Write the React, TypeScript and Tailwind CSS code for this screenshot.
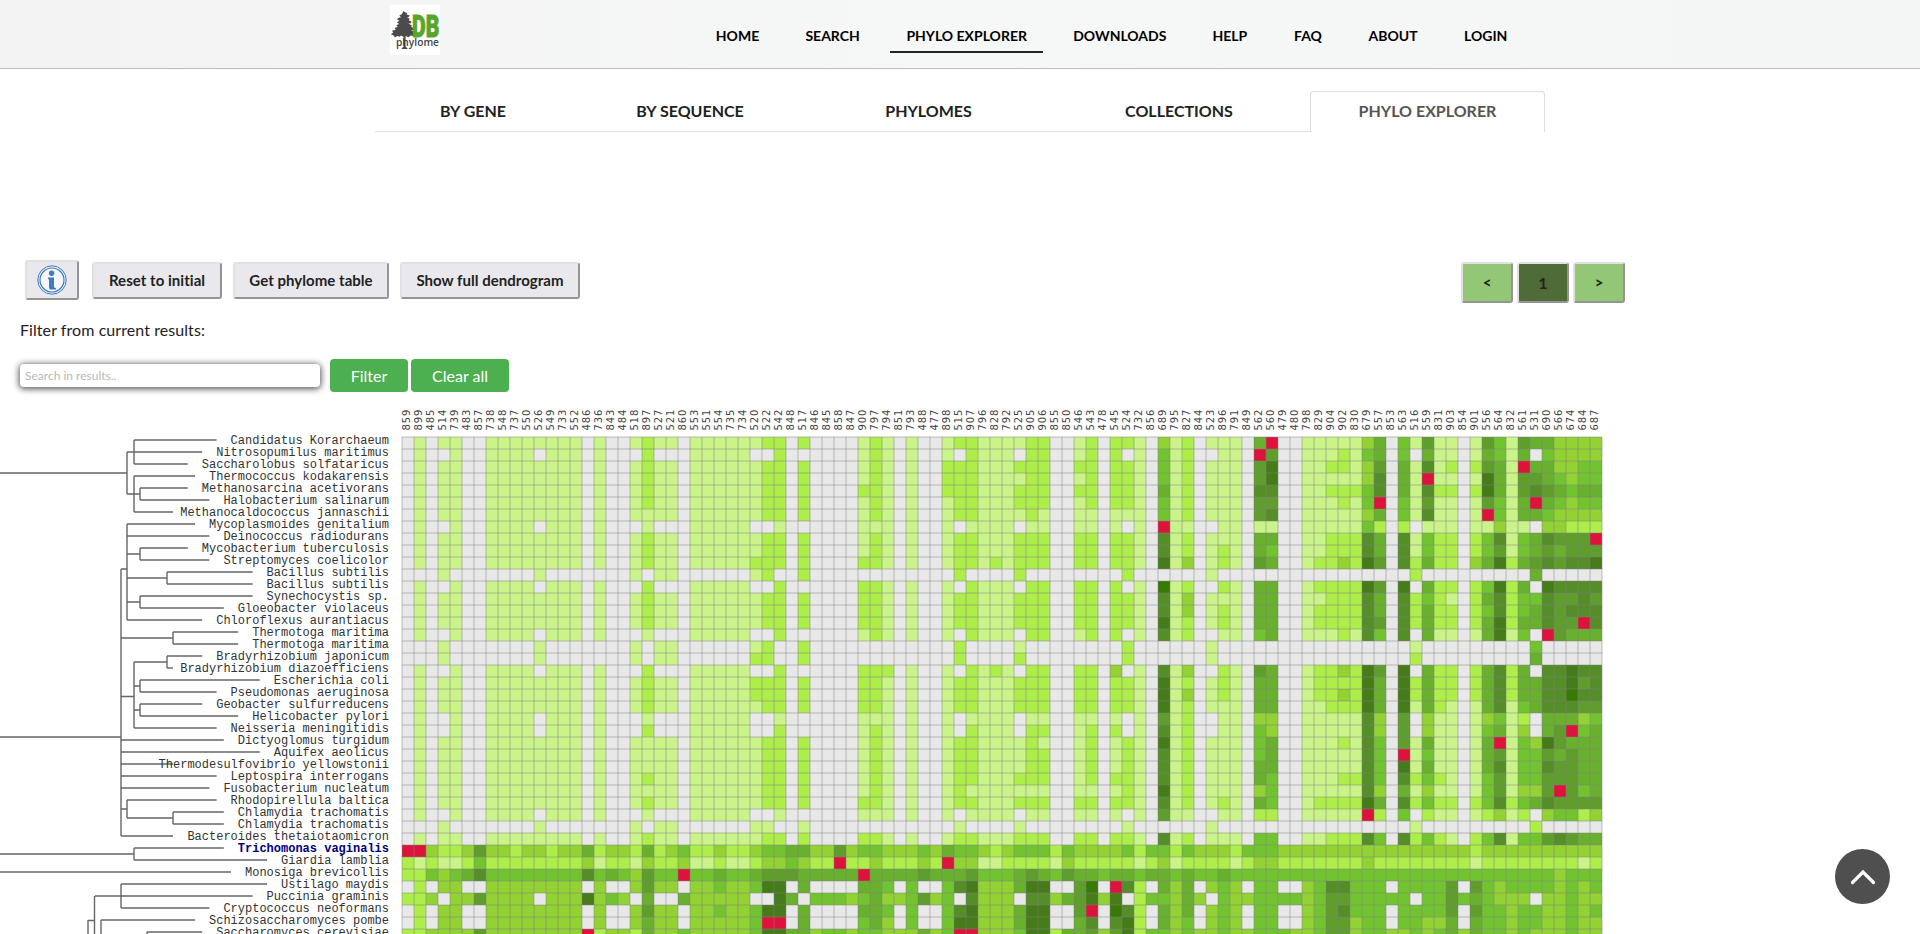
import React from 'react';

const HEADS = (
  '859 899 485 514 739 483 857 738 548 737 550 526 549 733 552 486 736 843 484 518 897 527 521 860 553 551 554 735 734 520 522 542 848 517 ' +
  '846 845 858 847 900 797 794 851 793 488 477 898 515 907 796 828 792 525 905 906 855 850 546 543 478 545 524 732 856 689 795 827 844 523 ' +
  '896 791 849 562 560 479 480 798 829 904 902 830 679 557 853 563 516 559 831 903 854 901 556 564 832 561 531 690 566 674 684 687'
).split(' ');

// name, x where the leaf branch starts, cell levels (0 = absent, 1-9 = amount, R = seed)
const F = '0101100 11111111 0100';
const M = '0100100 11110111 0100';
const S = '0001000 00001000 0000';
const ROWS: [string, number, string][] = [
  ['Candidatus Korarchaeum', 134, `${F} 12110 11111 12202 0000 1210100 122111122 00 1202210 31201 1105R00 11111 35041611 0164165 53333`],
  ['Nitrosopumilus maritimus', 127, `${M} 02000 11111 00200 0000 1210100 102111022 00 1202010 41200 110R600 11121 45040511 0154150 43333`],
  ['Saccharolobus solfataricus', 134, `${F} 12110 11111 12202 0000 1210100 222111222 00 2202210 41201 1106800 11221 36051712 02651R5 53344`],
  ['Thermococcus kodakarensis', 134, `${F} 12110 11111 12202 0000 1210100 222111122 00 1202210 41201 1106800 11111 37051R11 0185166 54344`],
  ['Methanosarcina acetivorans', 140, `${F} 12110 11111 12202 0000 2210100 222111222 00 2202210 51201 1107700 11222 47051722 0285167 65455`],
  ['Halobacterium salinarum', 140, `${F} 12110 11111 12202 0000 1210100 122111222 00 1202210 41201 1106600 11121 4R041611 016415R 54344`],
  ['Methanocaldococcus jannaschii', 134, `${F} 11110 11111 12202 0000 1210100 122111121 00 1101110 41201 1106700 11111 35041711 01R4155 43333`],
  ['Mycoplasmoides genitalium', 127, `${M} 01000 11111 00100 0000 1110100 101111011 00 1101010 R1100 1101100 11111 42020111 0113110 33222`],
  ['Deinococcus radiodurans', 127, `${F} 12110 11111 12202 0000 1210100 122111222 00 2202210 71201 1105500 11222 75071422 0247145 7666R`],
  ['Mycobacterium tuberculosis', 140, `${F} 12110 11111 12202 0000 1210100 122111222 00 2202210 71201 2105400 11222 75071422 0246145 65666`],
  ['Streptomyces coelicolor', 140, `${F} 12110 11111 22202 0000 2210100 122121222 00 2202210 81301 2106500 12232 86072522 0358256 76778`],
  ['Bacillus subtilis', 167, `${S} 10110 00000 12002 0000 0000000 020000200 00 0000200 00001 0000000 00000 00002000 0000005 00000`],
  ['Bacillus subtilis', 167, `${M} 02000 11111 00200 0000 2210100 102111022 00 2202010 91200 2105500 12222 86080522 0248250 87777`],
  ['Synechocystis sp.', 140, `${F} 12110 11111 12202 0000 2210100 122111222 00 2202210 71301 1105500 11222 75072421 0257244 76676`],
  ['Gloeobacter violaceus', 140, `${F} 12110 11111 12202 0000 2210100 122111222 00 2202210 71301 2105500 12222 75072522 0247245 76777`],
  ['Chloroflexus aurantiacus', 127, `${F} 12110 11111 12202 0000 2210100 122111222 00 2202210 81201 2105500 12222 76072522 0258255 766R7`],
  ['Thermotoga maritima', 173, `${M} 01000 11111 00200 0000 1210100 102111022 00 1202010 71200 1104500 11121 74070511 0158140 R6555`],
  ['Thermotoga maritima', 173, `${S} 10110 00000 12002 0000 0000000 020000100 00 0000200 00001 0000000 00000 00001000 0000004 00000`],
  ['Bradyrhizobium japonicum', 167, `${S} 10110 00000 22002 0000 0000000 020000200 00 0000200 00001 0000000 00000 00002000 0000005 00000`],
  ['Bradyrhizobium diazoefficiens', 167, `${M} 02000 11111 00200 0000 2220100 102121022 00 2203010 71300 2106500 12232 86080522 0257250 77877`],
  ['Escherichia coli', 140, `${F} 12110 11111 22202 0000 2210100 122111222 00 2202210 81201 2105500 12222 85082522 0257255 77867`],
  ['Pseudomonas aeruginosa', 140, `${F} 12110 11111 22202 0000 2210100 122111222 00 2202210 81301 2105500 12232 85082522 0257255 77977`],
  ['Geobacter sulfurreducens', 140, `${F} 12110 11111 12202 0000 2210100 122111222 00 2202210 81201 1105500 11222 85081521 0157145 77766`],
  ['Helicobacter pylori', 140, `${M} 01000 11111 00100 0000 1110100 101111011 00 1101010 61200 1103300 11111 73060311 0134120 55534`],
  ['Neisseria meningitidis', 134, `${M} 02000 11111 00200 0000 1210100 102111022 00 1202010 71200 1104300 11111 73060311 0145130 56R45`],
  ['Dictyoglomus turgidum', 121, `${F} 11110 11111 12202 0000 1210100 122111121 00 1201210 81201 1104500 11121 74061511 015R143 86555`],
  ['Aquifex aeolicus', 121, `${F} 11110 11111 12202 0000 1210100 122111122 00 1201210 71201 1104500 11111 740R1411 0156144 65655`],
  ['Thermodesulfovibrio yellowstonii', 121, `${F} 11110 11111 12202 0000 1210100 122111122 00 1201210 71201 1105500 11111 74081511 0157144 76655`],
  ['Leptospira interrogans', 121, `${F} 12110 11111 12202 0000 1210100 122111222 00 1202210 71201 1105400 11122 74072421 0146144 66655`],
  ['Fusobacterium nucleatum', 121, `${F} 11110 11111 12202 0000 1210100 121111111 00 1101210 81201 1103400 11111 73051311 0146133 6R645`],
  ['Rhodopirellula baltica', 127, `${F} 12110 11111 12202 0000 2210100 122111222 00 2202210 71201 2105400 12222 85072422 0247245 76666`],
  ['Chlamydia trachomatis', 173, `${M} 01000 11111 00100 0000 1110100 101111011 00 1101010 61100 1102200 11111 R2040211 0123120 34423`],
  ['Chlamydia trachomatis', 173, `${S} 10110 00000 11001 0000 0000000 010000100 00 0000100 00001 0000000 00000 00001000 0000002 00000`],
  ['Bacteroides thetaiotaomicron', 121, `${F} 12110 11111 12202 0000 2210100 122111222 00 2202210 71201 1104400 11222 74072421 0247144 67655`],
  ['Trichomonas vaginalis', 134, 'RR32236 33233233 5233 25234 22322 34455 3363 4433343 544323444 24 3333424 42433 3244433 33333 33333333 3233333 33333'],
  ['Giardia lamblia', 134, '2121124 22222222 3122 13223 11211 23343 22R2 2322232 R33112222 13 2222212 31222 2123322 22222 32222222 2122222 22212'],
  ['Monosiga brevicollis', -5, '2243457 44444444 7454 3644R 44544 56665 5555 R555565 556444565 46 5545545 54544 5444444 44444 44444444 4444444 43444'],
  ['Ustilago maydis', 121, '0203300 33333333 0300 36330 33433 48805 0000 5540400 478333588 00 690R720 53503 4304400 34774 44044446 0643444 43434'],
  ['Puccinia graminis', 95, '2230336 33330333 8343 05005 33333 00850 4443 4533463 407333077 35 6838024 43530 4334444 34664 44440446 4543330 33433'],
  ['Cryptococcus neoformans', 121, '0203300 33333333 0300 36330 33433 48805 0000 5540400 478333588 00 6R09720 53503 4304400 34674 44044446 0644344 33434'],
  ['Schizosaccharomyces pombe', 101, '0203300 33333333 0300 35330 33333 4RR05 0000 4530400 488333588 00 5707820 53403 4304400 34663 44044335 0544344 33433'],
  ['Saccharomyces cerevisiae', 147, '2233336 33333333 R233 25334 33333 48855 3443 4433353 4RR333488 25 5636824 43433 4334443 34663 44334345 3544343 33433'],
];

const FILL: Record<string, string> = {
  '0': '#e8e8e8', '1': '#caf389', '2': '#adee4a', '3': '#92d233', '4': '#71c430',
  '5': '#68b02e', '6': '#5f9e2d', '7': '#558d29', '8': '#457b18', '9': '#387a05', R: '#dc143c',
};

const y = (r: number) => 40 + r * 12;

// internal branches: M/H/V path segments between row centres
const BRANCHES = [
  `M0 73H127 M127 ${y(1)}V94 M134 ${y(0)}V${y(2)} M134 ${y(3)}V${y(6)} M127 94H140 M140 ${y(4)}V${y(5)}`,
  `M127 ${y(7)}V${y(15)} M140 ${y(9)}V${y(10)} M127 154H140 M127 178H167 M167 ${y(11)}V${y(12)} M127 202H140 M140 ${y(13)}V${y(14)} M121 169H127`,
  `M121 169V${y(33)} M121 238H173 M173 ${y(16)}V${y(17)}`,
  `M134 262V${y(24)} M134 262H167 M167 ${y(18)}V${y(19)} M134 286H140 M140 ${y(20)}V${y(21)} M134 310H140 M140 ${y(22)}V${y(23)} M121 296.5H134`,
  `M0 337H121 M121 409H127 M127 ${y(30)}V418 M127 418H173 M173 ${y(31)}V${y(32)}`,
  `M0 454H134 M134 ${y(34)}V${y(35)}`,
  `M121 ${y(37)}V${y(39)} M94.500 ${y(38)}V560 M88 520.5H94.500 M88 520V560 M101 ${y(40)}V560 M147 ${y(41)}V560`,
].join(' ');

function Logo() {
  return (
    <svg className="h-[50px] w-[50px] overflow-visible bg-white" viewBox="0 0 50 50">
      <g fill="#4b4b4b">
        <path d="M13.500 6l1.800 1.500 2 .5-.8 1.500 3 .8-.5 1.700-2 .6 2.800 1.200-1 1.800 2.800 1-.8 1.600-2.500.4 3.600 1.800-.7 1.700 3.300 1.200-1 1.600-2.600.2 4 2-.8 1.800 2 1.500-3 .7-2.500-.5-2 1.600-3-1.200v10.500l2.300 2.500h-6.600l2.300-2.500V32l-2.500-1.600-1.500 1.400-2.300-.8-2.200 1.400-1.500-1.800L.8 29.200l2.400-1.700L2 25.800l3.600-1-.8-1.800 3-1.300-1.600-1.500 3-1.200-2.400-1.700 2.800-1.500-2.600-1.200 1.500-1.900 2.500-.4-1.700-1.800 2.500-1.200z" />
      </g>
      <g transform="translate(22 32.200) scale(0.66 1)">
        <text className="fill-[#59a52c] stroke-[#59a52c] stroke-1 font-['Roboto'] text-[32px] font-black">DB</text>
      </g>
      <text x="6" y="41" textLength="43" lengthAdjust="spacingAndGlyphs" className="fill-[#444] font-['Open_Sans'] text-[10.500px] font-semibold">phylome</text>
    </svg>
  );
}

const NAV: [string, string][] = [
  ['HOME', 'w-[75px]'],
  ['SEARCH', 'w-[86px]'],
  ['PHYLO EXPLORER', 'w-[153px]'],
  ['DOWNLOADS', 'w-[124px]'],
  ['HELP', 'w-[67px]'],
  ['FAQ', 'w-[60px]'],
  ['ABOUT', 'w-[81px]'],
  ['LOGIN', 'w-[75px]'],
];

function Header() {
  return (
    <header className="flex h-[69px] border-b border-[#bcbcbc] bg-linear-to-r from-[#f3f3f3] via-[#f6f7f7] to-[#f4f6f6] pl-[390px]">
      <div className="mt-[5px]">
        <Logo />
      </div>
      <nav className="ml-[260px] flex gap-[14.6px] pt-[17px]">
        {NAV.map(([label, width]) => (
          <a
            key={label}
            className={`flex h-[36px] justify-center pt-[9px] text-[14px] leading-[20px] font-bold whitespace-nowrap text-black ${width} ${label === 'PHYLO EXPLORER' ? 'border-b-2 border-[#222]' : ''}`}
          >
            {label}
          </a>
        ))}
      </nav>
    </header>
  );
}

const TABS: [string, string][] = [
  ['BY GENE', 'w-[196px]'],
  ['BY SEQUENCE', 'w-[238px]'],
  ['PHYLOMES', 'w-[239px]'],
  ['COLLECTIONS', 'w-[262px]'],
];

function Tabs() {
  return (
    <div className="mt-[22px] ml-[375px] flex h-[41px] text-[16px] leading-[20px] font-bold text-[#222]">
      {TABS.map(([label, width]) => (
        <div key={label} className={`flex justify-center border-b border-[#ddd] pt-[10px] ${width}`}>
          {label}
        </div>
      ))}
      <div className="flex w-[235px] justify-center rounded-t-[4px] border border-b-0 border-[#ddd] pt-[9px] text-[#555]">
        PHYLO EXPLORER
      </div>
    </div>
  );
}

const RAISED = 'flex items-center justify-center rounded-[3px] border-2 border-t-[#e1e1e1] border-l-[#e1e1e1] border-r-[#949494] border-b-[#949494]';

function Toolbar() {
  return (
    <div className="mt-[128px] flex h-[44px] items-start text-[15px] font-bold tracking-[0.04px] text-[#222]">
      <button className={`${RAISED} ml-[25px] h-[40px] w-[54px] bg-[#e9e9ed]`}>
        <svg className="h-[30px] w-[30px]" viewBox="0 0 30 30">
          <circle cx="15" cy="15" r="14.2" fill="#f4f6fb" stroke="#3c78c0" strokeWidth="1" />
          <circle cx="15" cy="15" r="12" fill="none" stroke="#3c78c0" strokeWidth="1.2" />
          <circle cx="14.6" cy="8.2" r="2.7" fill="#3f7bc0" />
          <path d="M11 12.5h6v9q0 1.500 2 1.500v1.500h-5.500q-1.500 0-1.500-2v-7.500q0-1-1-1z" fill="#3f7bc0" />
        </svg>
      </button>
      <button className={`${RAISED} mt-[2px] ml-[13px] h-[37px] w-[130px] bg-[#e9e9ed]`}>Reset to initial</button>
      <button className={`${RAISED} mt-[2px] ml-[11px] h-[37px] w-[156px] bg-[#e9e9ed]`}>Get phylome table</button>
      <button className={`${RAISED} mt-[2px] ml-[11px] h-[37px] w-[180px] bg-[#e9e9ed]`}>Show full dendrogram</button>
      <div className="mt-[2px] ml-[881px] flex gap-[4px]">
        <button className={`${RAISED} h-[41px] w-[52px] bg-[#93c675]`}>&lt;</button>
        <button className={`${RAISED} h-[41px] w-[52px] bg-[#4e6b38] text-[16px]`}>1</button>
        <button className={`${RAISED} h-[41px] w-[52px] bg-[#93c675]`}>&gt;</button>
      </div>
    </div>
  );
}

function Filter() {
  return (
    <div>
      <p className="mt-[14px] ml-[20px] text-[16px] leading-[24px] tracking-[0.07px] text-[#222]">Filter from current results:</p>
      <div className="mt-[17px] ml-[20px] flex h-[33px] items-center text-[16px] text-white">
        <input
          className="h-[23px] w-[300px] rounded-[4px] bg-white px-[5px] text-[12px] shadow-[0_1px_6px_1px_#555] placeholder:text-[#b9b9b9]"
          placeholder="Search in results.."
        />
        <button className="ml-[10px] h-[33px] w-[78px] rounded-[4px] bg-[#4caf50] pt-px">Filter</button>
        <button className="ml-[3px] h-[33px] w-[98px] rounded-[4px] bg-[#4caf50] pt-px">Clear all</button>
      </div>
    </div>
  );
}

function Matrix() {
  const cells = ROWS.map((r) => r[2].replace(/ /g, ''));
  return (
    <svg className="mt-[8px] block h-[534px] w-[1620px]" viewBox="0 0 1620 534">
      {HEADS.map((h, i) => (
        <text
          key={i}
          transform={`translate(${410 + i * 12} 30.5) rotate(-90)`}
          textLength="21"
          className="fill-[#444] font-['DejaVu_Sans'] text-[10px]"
        >
          {h}
        </text>
      ))}
      {cells.map((row, r) =>
        row.split('').map((c, i) => (
          <rect key={`${r}-${i}`} x={402 + i * 12} y={37 + r * 12} width="12" height="12" fill={FILL[c]} />
        )),
      )}
      <g stroke="#808080" strokeOpacity="0.5">
        {Array.from({ length: 101 }, (_, i) => (
          <path key={i} d={`M${402 + i * 12} 37V534`} strokeWidth="1" />
        ))}
        {Array.from({ length: 42 }, (_, i) => (
          <path key={i} d={`M402 ${37 + i * 12}H1602`} strokeWidth="1" />
        ))}
      </g>
      <g stroke="#666" fill="none" strokeWidth="1.4">
        <path d={BRANCHES} />
        {ROWS.map(([name, start], r) => {
          const end = name.length > 27 ? 173 : 389 - name.length * 7.2 - 14;
          return <path key={r} d={`M${start} ${y(r)}H${end}`} />;
        })}
      </g>
      {ROWS.map(([name], r) => (
        <text
          key={r}
          x={389 - name.length * 7.2}
          y={44 + r * 12}
          textLength={name.length * 7.2}
          className={
            name === 'Trichomonas vaginalis'
              ? "fill-[#000080] font-['Courier','Nimbus_Mono_PS','FreeMono','Liberation_Mono',monospace] text-[12px] font-bold"
              : "fill-[#333] font-['Courier','Nimbus_Mono_PS','FreeMono','Liberation_Mono',monospace] text-[12px]"
          }
        >
          {name}
        </text>
      ))}
    </svg>
  );
}

export default function App() {
  return (
    <div className="relative h-[934px] w-[1920px] overflow-hidden bg-white font-['Lato',sans-serif]">
      <Header />
      <Tabs />
      <Toolbar />
      <Filter />
      <Matrix />
      <button className="absolute right-[30px] bottom-[30px] flex h-[55px] w-[55px] items-center justify-center rounded-full bg-[#4f4f4f]">
        <svg className="h-[26px] w-[26px]" viewBox="0 0 26 26">
          <path d="M2.500 18.500L13 8L23.500 18.500" fill="none" stroke="#fff" strokeWidth="3.200" strokeLinecap="round" />
        </svg>
      </button>
    </div>
  );
}
